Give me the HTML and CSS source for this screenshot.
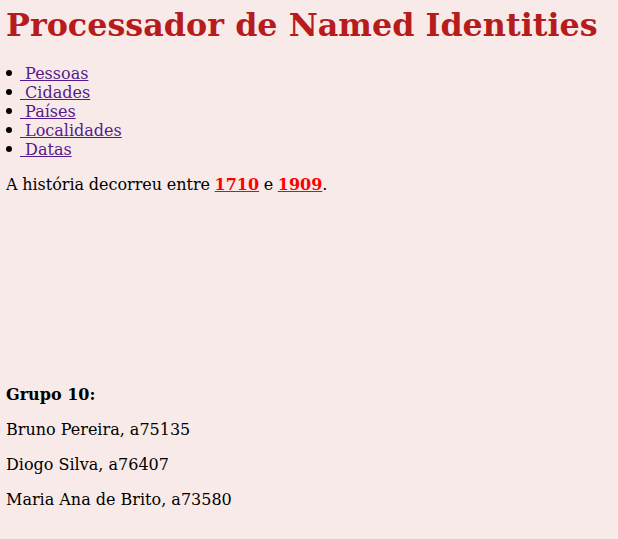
FILE: index.html
```html
<!DOCTYPE html>
<html lang="pt">
<head>
<meta charset="utf-8">
<title>Processador de Named Identities</title>
<link rel="stylesheet" href="styles.css">
</head>
<body>
<h1 class="title">Processador de Named Identities</h1>
<ul class="menu">
  <li><a href="#pessoas"><span class="icon"></span> Pessoas</a></li>
  <li><a href="#cidades"><span class="icon"></span> Cidades</a></li>
  <li><a href="#paises"><span class="icon"></span> Países</a></li>
  <li><a href="#localidades"><span class="icon"></span> Localidades</a></li>
  <li><a href="#datas"><span class="icon"></span> Datas</a></li>
</ul>
<p class="intro">A história decorreu entre <a class="year" href="#1710">1710</a> e <a class="year" href="#1909">1909</a>.</p>
<div class="spacer"></div>
<p class="group">Grupo 10:</p>
<p>Bruno Pereira, a75135</p>
<p>Diogo Silva, a76407</p>
<p>Maria Ana de Brito, a73580</p>
</body>
</html>
```
FILE: styles.css
```css
html {
  background: #f8eae9;
}
body {
  margin: 6px;
  font-family: "DejaVu Serif", serif;
  font-size: 16px;
  color: #000;
}
.title {
  color: #b71c1c;
  font-size: 31.8px;
  margin: 0 0 20px;
  line-height: 38px;
}
.menu {
  list-style: none;
  padding: 0;
  margin: 0;
}
.menu li::before {
  content: "";
  display: inline-block;
  width: 6px;
  height: 6px;
  border-radius: 50%;
  background: #000;
  margin-right: 8px;
  vertical-align: 3px;
}
.menu a {
  color: #551a8b;
}
.icon {
  display: inline-block;
}
.intro {
  word-spacing: -0.5px;
}
.year {
  color: #ff0000;
  font-weight: bold;
}
.spacer {
  height: 159px;
}
.group {
  font-weight: bold;
}
p {
  margin: 16px 0;
}
```
